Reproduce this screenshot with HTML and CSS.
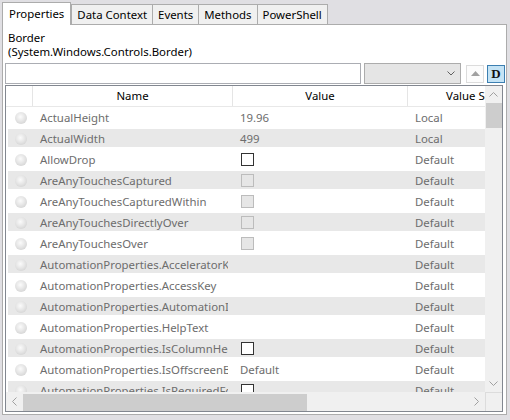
FILE: index.html
```html
<!DOCTYPE html>
<html>
<head>
<meta charset="utf-8">
<link rel="stylesheet" href="styles.css">
</head>
<body>
<div class="tabs">
  <div class="tab active">Properties</div>
  <div class="tab">Data Context</div>
  <div class="tab">Events</div>
  <div class="tab">Methods</div>
  <div class="tab">PowerShell</div>
</div>
<div class="panel">
  <div class="title">
    <div>Border</div>
    <div>(System.Windows.Controls.Border)</div>
  </div>
  <div class="toolbar">
    <div class="search"></div>
    <div class="combo">
      <svg width="8" height="5" viewBox="0 0 8 5"><polyline points="0.5,0.5 4,4 7.5,0.5" fill="none" stroke="#606060" stroke-width="1"/></svg>
    </div>
    <div class="btn up">
      <svg width="9" height="5" viewBox="0 0 9 5"><polygon points="0,5 4.5,0 9,5" fill="#a0a0a0"/></svg>
    </div>
    <div class="btn dbtn">D</div>
  </div>
  <div class="grid">
    <div class="data">
      <div class="header">
        <div class="hcell"></div>
        <div class="hcell">Name</div>
        <div class="hcell">Value</div>
        <div class="hcell">Value Source</div>
      </div>
      <div class="rows">
        <div class="row"><div class="rh"><span class="dot"></span></div><div class="cell">ActualHeight</div><div class="cell">19.96</div><div class="cell">Local</div></div>
        <div class="row alt"><div class="rh"><span class="dot"></span></div><div class="cell">ActualWidth</div><div class="cell">499</div><div class="cell">Local</div></div>
        <div class="row"><div class="rh"><span class="dot"></span></div><div class="cell">AllowDrop</div><div class="cell"><span class="cb"></span></div><div class="cell">Default</div></div>
        <div class="row alt"><div class="rh"><span class="dot"></span></div><div class="cell">AreAnyTouchesCaptured</div><div class="cell"><span class="cb dis"></span></div><div class="cell">Default</div></div>
        <div class="row"><div class="rh"><span class="dot"></span></div><div class="cell">AreAnyTouchesCapturedWithin</div><div class="cell"><span class="cb dis"></span></div><div class="cell">Default</div></div>
        <div class="row alt"><div class="rh"><span class="dot"></span></div><div class="cell">AreAnyTouchesDirectlyOver</div><div class="cell"><span class="cb dis"></span></div><div class="cell">Default</div></div>
        <div class="row"><div class="rh"><span class="dot"></span></div><div class="cell">AreAnyTouchesOver</div><div class="cell"><span class="cb dis"></span></div><div class="cell">Default</div></div>
        <div class="row alt"><div class="rh"><span class="dot"></span></div><div class="cell">AutomationProperties.AcceleratorKey</div><div class="cell"></div><div class="cell">Default</div></div>
        <div class="row"><div class="rh"><span class="dot"></span></div><div class="cell">AutomationProperties.AccessKey</div><div class="cell"></div><div class="cell">Default</div></div>
        <div class="row alt"><div class="rh"><span class="dot"></span></div><div class="cell">AutomationProperties.AutomationId</div><div class="cell"></div><div class="cell">Default</div></div>
        <div class="row"><div class="rh"><span class="dot"></span></div><div class="cell">AutomationProperties.HelpText</div><div class="cell"></div><div class="cell">Default</div></div>
        <div class="row alt"><div class="rh"><span class="dot"></span></div><div class="cell">AutomationProperties.IsColumnHeader</div><div class="cell"><span class="cb"></span></div><div class="cell">Default</div></div>
        <div class="row"><div class="rh"><span class="dot"></span></div><div class="cell">AutomationProperties.IsOffscreenBehavior</div><div class="cell">Default</div><div class="cell">Default</div></div>
        <div class="row alt"><div class="rh"><span class="dot"></span></div><div class="cell">AutomationProperties.IsRequiredForForm</div><div class="cell"><span class="cb"></span></div><div class="cell">Default</div></div>
      </div>
    </div>
    <div class="vscroll">
      <div class="arrow"><svg width="9" height="5" viewBox="0 0 9 5"><polyline points="0.5,4.5 4.5,0.5 8.5,4.5" fill="none" stroke="#a0a0a0"/></svg></div>
      <div class="vtrack"><div class="vthumb"></div></div>
      <div class="arrow"><svg width="9" height="5" viewBox="0 0 9 5"><polyline points="0.5,0.5 4.5,4.5 8.5,0.5" fill="none" stroke="#a0a0a0"/></svg></div>
    </div>
    <div class="hscroll">
      <div class="harrow"><svg width="5" height="9" viewBox="0 0 5 9"><polyline points="4.5,0.5 0.5,4.5 4.5,8.5" fill="none" stroke="#a0a0a0"/></svg></div>
      <div class="htrack"><div class="hthumb"></div></div>
      <div class="harrow"><svg width="5" height="9" viewBox="0 0 5 9"><polyline points="0.5,0.5 4.5,4.5 0.5,8.5" fill="none" stroke="#a0a0a0"/></svg></div>
    </div>
    <div class="corner"></div>
  </div>
</div>
</body>
</html>
```
FILE: styles.css
```css
html, body {
  margin: 0;
  padding: 0;
}
body {
  background: #e0dfe3;
  font-family: "Noto Sans", "Open Sans", sans-serif;
  font-size: 11.4px;
  color: #000;
  width: 510px;
  height: 420px;
  overflow: hidden;
}
.tabs {
  display: flex;
  align-items: flex-end;
  height: 25px;
  padding-left: 2px;
  box-sizing: border-box;
  position: relative;
  z-index: 1;
}
.tab {
  height: 20px;
  line-height: 19px;
  padding: 0 5px;
  border: 1px solid #acacac;
  border-bottom: none;
  background: #f0f0f0;
  margin-left: -1px;
  box-sizing: border-box;
  margin-bottom: 1px;
}
.tab:first-child {
  margin-left: 0;
}
.tab.active {
  background: #fff;
  height: 23px;
  line-height: 22px;
  margin-bottom: 0;
  padding: 0 6px;
  z-index: 2;
  position: relative;
}
.tab.active + .tab {
  margin-left: 0;
}
.panel {
  margin: -1px 3px 0 2px;
  height: 391px;
  border: 1px solid #acacac;
  background: #fff;
  box-sizing: border-box;
}
.title {
  padding: 6px 0 0 5px;
  line-height: 14px;
  height: 37px;
  box-sizing: border-box;
}
.toolbar {
  display: flex;
  align-items: center;
  height: 21px;
  padding-left: 2px;
  margin-top: 1px;
}
.search {
  width: 356px;
  height: 21px;
  border: 1px solid #abadb3;
  box-sizing: border-box;
  background: #fff;
}
.combo {
  margin-left: 3px;
  width: 97px;
  height: 21px;
  border: 1px solid #acacac;
  box-sizing: border-box;
  background: #e5e5e5;
  display: flex;
  align-items: center;
  justify-content: flex-end;
  padding-right: 5px;
}
.btn {
  width: 18px;
  height: 18px;
  box-sizing: border-box;
  display: flex;
  align-items: center;
  justify-content: center;
}
.up {
  margin-left: 5px;
  border: 1px solid #dcdcdc;
  background: #fcfcfc;
}
.dbtn {
  margin-left: 3px;
  border: 1px solid #3c7fb1;
  background: #c4e3f5;
  font-family: "Liberation Serif", "DejaVu Serif", serif;
  font-weight: bold;
  font-size: 13px;
  color: #111;
}
.grid {
  margin: 1px 0 0 2px;
  width: 498px;
  height: 327px;
  border: 1px solid #828790;
  box-sizing: border-box;
  display: grid;
  grid-template-columns: 479px 17px;
  grid-template-rows: 306px 19px;
}
.data {
  overflow: hidden;
}
.header {
  display: grid;
  grid-template-columns: 27px 200px 175px 146px;
  height: 21px;
  width: 548px;
  border-bottom: 1px solid #e8e8e8;
  box-sizing: border-box;
}
.hcell {
  border-right: 1px solid #e5e5e5;
  text-align: center;
  line-height: 20px;
  white-space: nowrap;
  overflow: hidden;
  color: #000;
}
.row {
  display: grid;
  grid-template-columns: 25px 200px 175px 77px;
  height: 21px;
  margin-left: 2px;
  color: #6d6d6d;
}
.row.alt {
  background: linear-gradient(to bottom, transparent 1px, #e8e8e8 1px, #e8e8e8 19px, transparent 19px);
}
.rh {
  display: flex;
  align-items: center;
  padding-left: 7px;
}
.dot {
  width: 12px;
  height: 12px;
  border-radius: 50%;
  background: radial-gradient(circle at 45% 40%, #fbfbfb 0%, #e6e6e6 45%, #c9c9c9 100%);
}
.cell {
  line-height: 21px;
  padding-left: 7px;
  margin-right: 5px;
  white-space: nowrap;
  overflow: hidden;
  display: flex;
  align-items: center;
}
.cb {
  width: 13px;
  height: 13px;
  border: 1px solid #333;
  box-sizing: border-box;
  background: #fff;
  margin-left: 1px;
  flex: none;
}
.cb.dis {
  border-color: #bcbcbc;
  background: #e6e6e6;
}
.vscroll {
  background: #f0f0f0;
  display: flex;
  flex-direction: column;
}
.arrow {
  height: 17px;
  display: flex;
  align-items: center;
  justify-content: center;
}
.vtrack {
  flex: 1;
}
.vthumb {
  width: 16px;
  margin-left: 1px;
  height: 25px;
  background: #cdcdcd;
}
.hscroll {
  background: #f0f0f0;
  display: flex;
}
.harrow {
  width: 17px;
  display: flex;
  align-items: center;
  justify-content: center;
}
.htrack {
  flex: 1;
  display: flex;
  align-items: flex-end;
}
.hthumb {
  width: 284px;
  height: 17px;
  background: #cdcdcd;
}
.corner {
  background: #f0f0f0;
  border-left: 1px solid #dcdcdc;
  border-top: 1px solid #dcdcdc;
}
```
